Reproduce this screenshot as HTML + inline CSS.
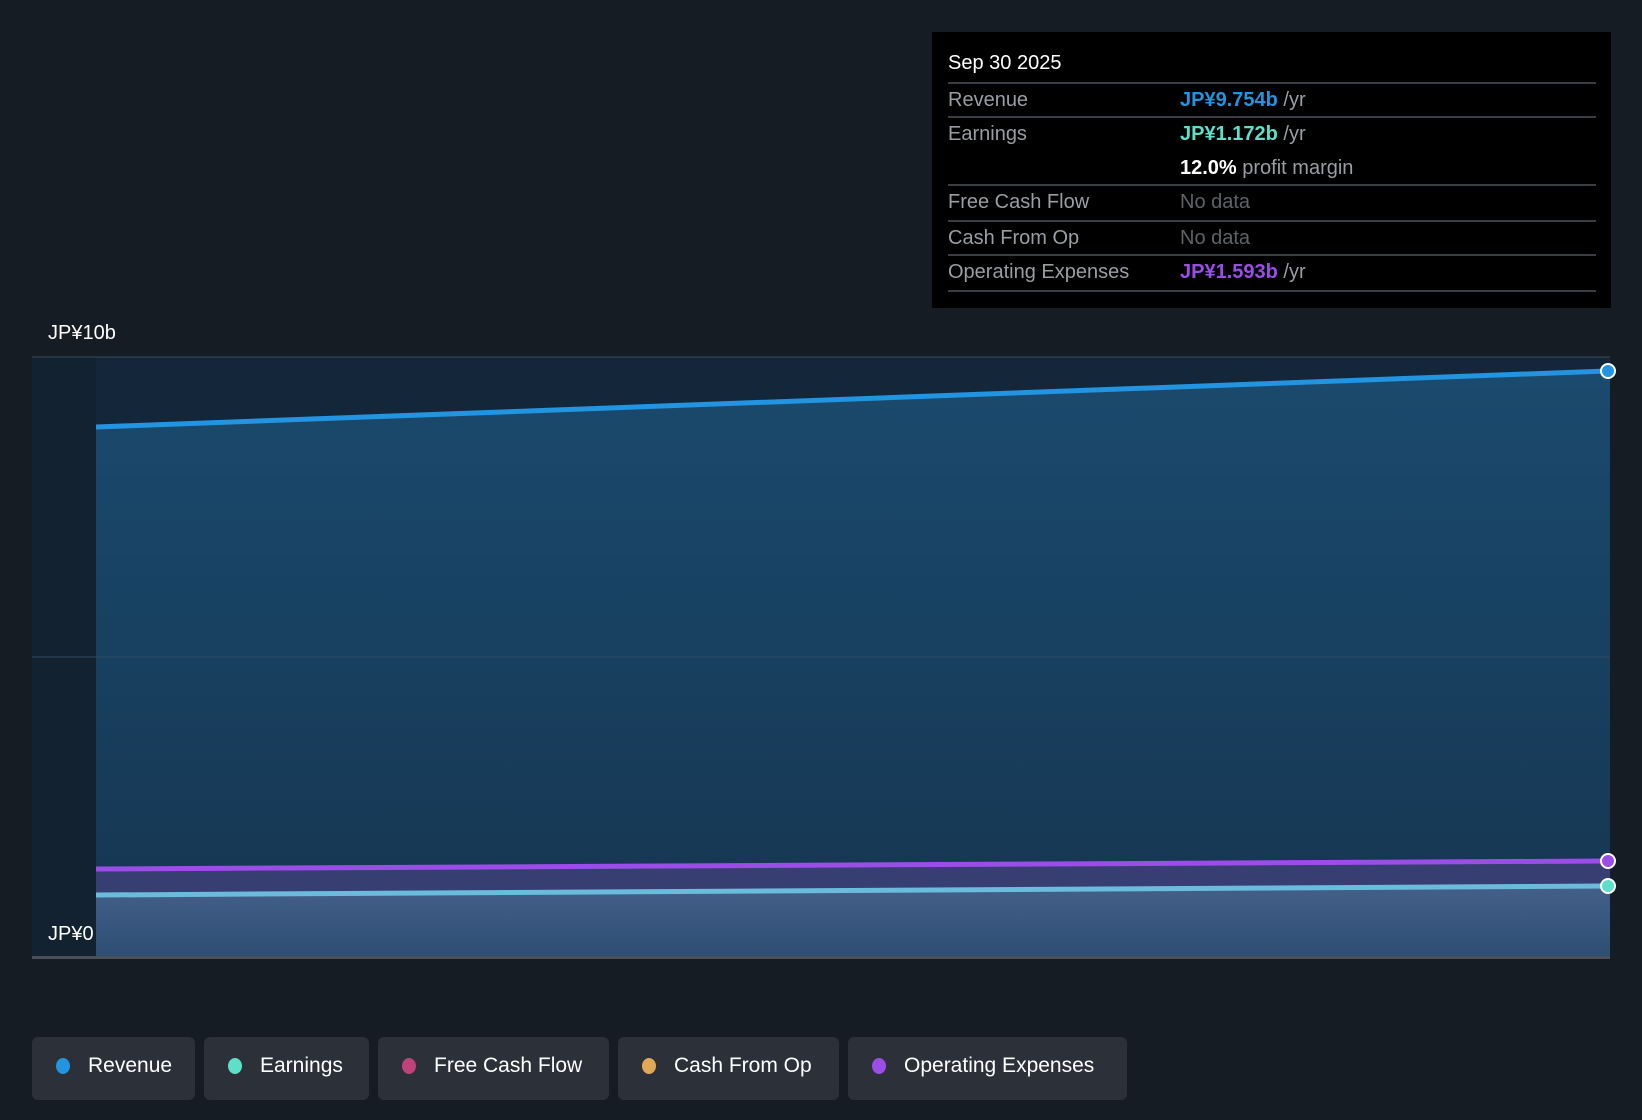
<!DOCTYPE html>
<html><head><style>
body{margin:0;width:1642px;height:1120px;background:#161c24;font-family:"Liberation Sans",sans-serif;position:relative;overflow:hidden}
.tt{position:absolute;left:932px;top:32px;width:679px;height:276px;background:#000}
.t{position:absolute;font-size:20px;color:#9a9ea4;white-space:nowrap}
.hl{position:absolute;left:948px;width:648px;height:2px;background:#3a3d42}
.lg{position:absolute;top:1037px;height:63px;background:#2b3039;border-radius:6px;color:#fff;font-size:21px;line-height:58px}
.lg i{position:absolute;left:24px;top:21px;width:14px;height:16px;border-radius:50%}
.lg span{position:absolute;left:56px}
</style></head><body>
<svg width="1642" height="1120" style="position:absolute;left:0;top:0">
<defs><linearGradient id="g" x1="0" y1="0" x2="0" y2="1"><stop offset="0" stop-color="#1a4a6e"/><stop offset="1" stop-color="#163550"/></linearGradient>
<linearGradient id="g2" x1="0" y1="0" x2="0" y2="1"><stop offset="0" stop-color="#44608a"/><stop offset="1" stop-color="#2d4e72"/></linearGradient></defs>
<rect x="32" y="357" width="1578" height="600" fill="#14263a"/>
<rect x="32" y="357" width="64" height="600" fill="#132230"/>
<line x1="32" y1="357" x2="1610" y2="357" stroke="#3a4a5a" stroke-width="1"/>
<path d="M96 427 L1607 371 L1610 371 L1610 957 L96 957Z" fill="url(#g)"/>
<line x1="32" y1="657" x2="1610" y2="657" stroke="#2e4a62" stroke-width="1"/>
<path d="M96 869 L1607 861 L1610 861 L1610 957 L96 957Z" fill="#363e72"/>
<path d="M96 895 L1607 886 L1610 886 L1610 957 L96 957Z" fill="url(#g2)"/>
<line x1="96" y1="427" x2="1607" y2="371" stroke="#2394df" stroke-width="5"/>
<line x1="96" y1="869" x2="1607" y2="861" stroke="#9b4de8" stroke-width="5"/>
<line x1="96" y1="895" x2="1607" y2="886" stroke="#6bbcdc" stroke-width="5"/>
<rect x="32" y="956" width="1578" height="3" fill="#4a4f58"/>
<circle cx="1608" cy="371" r="7" fill="#2394df" stroke="#fff" stroke-width="2"/>
<circle cx="1608" cy="861" r="7" fill="#9b4de8" stroke="#fff" stroke-width="2"/>
<circle cx="1608" cy="886" r="7" fill="#5ee0c8" stroke="#fff" stroke-width="2"/>
</svg>
<div class="t" style="left:48px;top:322px;color:#fff">JP¥10b</div>
<div class="t" style="left:48px;top:923px;color:#fff">JP¥0</div>
<div class="tt"></div>
<div class="t" style="left:948px;top:52px;color:#fff">Sep 30 2025</div>
<div class="hl" style="top:82px"></div>
<div class="t" style="left:948px;top:89px">Revenue</div><div class="t" style="left:1180px;top:89px"><b style="color:#2394df">JP¥9.754b</b> /yr</div>
<div class="hl" style="top:116px"></div>
<div class="t" style="left:948px;top:123px">Earnings</div><div class="t" style="left:1180px;top:123px"><b style="color:#5ee0c8">JP¥1.172b</b> /yr</div>
<div class="t" style="left:1180px;top:157px"><b style="color:#fff">12.0%</b> profit margin</div>
<div class="hl" style="top:184px"></div>
<div class="t" style="left:948px;top:191px">Free Cash Flow</div><div class="t" style="left:1180px;top:191px;color:#5f6368">No data</div>
<div class="hl" style="top:220px"></div>
<div class="t" style="left:948px;top:227px">Cash From Op</div><div class="t" style="left:1180px;top:227px;color:#5f6368">No data</div>
<div class="hl" style="top:254px"></div>
<div class="t" style="left:948px;top:261px">Operating Expenses</div><div class="t" style="left:1180px;top:261px"><b style="color:#9b4de8">JP¥1.593b</b> /yr</div>
<div class="hl" style="top:290px"></div>
<div class="lg" style="left:32px;width:163px"><i style="background:#2394df"></i><span>Revenue</span></div>
<div class="lg" style="left:204px;width:165px"><i style="background:#5ee0c8"></i><span>Earnings</span></div>
<div class="lg" style="left:378px;width:231px"><i style="background:#c0427a"></i><span>Free Cash Flow</span></div>
<div class="lg" style="left:618px;width:221px"><i style="background:#e3a857"></i><span>Cash From Op</span></div>
<div class="lg" style="left:848px;width:279px"><i style="background:#9b4de8"></i><span>Operating Expenses</span></div>
</body></html>
